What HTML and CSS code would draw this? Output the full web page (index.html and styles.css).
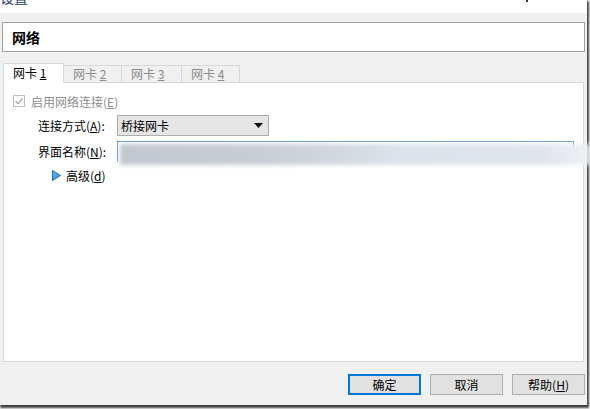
FILE: index.html
```html
<!DOCTYPE html>
<html lang="zh">

<head>
    <meta charset="UTF-8">
    <title>设置 - 网络</title>
    <link rel="stylesheet" href="styles.css">
</head>

<body>
    <div class="window">
        <div class="titlebar">
            <span class="title">设置</span>
            <span class="ctl-min"></span>
            <span class="ctl-close">✕</span>
        </div>

        <div class="content">
            <div class="header">网络</div>

            <div class="tabs">
                <div class="tab active">网卡 <u>1</u></div>
                <div class="tab">网卡 <u>2</u></div>
                <div class="tab wide">网卡 <u>3</u></div>
                <div class="tab">网卡 <u>4</u></div>
            </div>

            <div class="panel">
                <div class="check-row">
                    <svg class="checkbox" width="12" height="12" viewBox="0 0 12 12">
                        <rect x="0.5" y="0.5" width="11" height="11" fill="#fff" stroke="#bcbcbc" />
                        <path d="M2.5 6.2 L5 8.6 L9.6 3.4" fill="none" stroke="#a8a8a8" stroke-width="1.4" />
                    </svg>
                    <span>启用网络连接(<u>E</u>)</span>
                </div>

                <div class="field-row">
                    <span class="field-label">连接方式(<u>A</u>):</span>
                    <div class="combo">
                        <span>桥接网卡</span>
                        <svg width="9" height="5" viewBox="0 0 9 5">
                            <path d="M0 0 H9 L4.5 5 Z" fill="#111" />
                        </svg>
                    </div>
                </div>

                <div class="field-row name-row">
                    <span class="field-label">界面名称(<u>N</u>):</span>
                    <div class="name-input"></div>
                    <!-- blurred-out adapter name -->
                    <div class="name-blur"></div>
                </div>

                <div class="adv-row">
                    <svg width="9" height="11" viewBox="0 0 9 11">
                        <defs>
                            <linearGradient id="tri" x1="0" y1="0" x2="1" y2="1">
                                <stop offset="0" stop-color="#7cc4f4" />
                                <stop offset="1" stop-color="#1a78cc" />
                            </linearGradient>
                        </defs>
                        <path d="M0.5 0.5 L8.5 5.5 L0.5 10.5 Z" fill="url(#tri)" stroke="#1c6fb8" />
                    </svg>
                    <span>高级(<u>d</u>)</span>
                </div>
            </div>

            <div class="buttons">
                <button class="btn default">确定</button>
                <button class="btn">取消</button>
                <button class="btn">帮助(<u>H</u>)</button>
            </div>
        </div>
    </div>
</body>

</html>
```

FILE: styles.css
```css
body {
    margin: 0;
    width: 590px;
    height: 409px;
    overflow: hidden;
    background: #ffffff;
    font-family: "Noto Sans CJK SC", "DejaVu Sans", sans-serif;
    font-size: 12px;
    color: #000;
}

u {
    text-underline-offset: 1px;
}

.window {
    width: 587px;
    height: 405px;
    background: #f0f0f0;
    box-shadow: 1px 2px 2px 1px rgba(0, 0, 0, 0.75);
    display: flex;
    flex-direction: column;
}

.titlebar {
    height: 13px;
    background: #ffffff;
    position: relative;
    overflow: hidden;
}

.title {
    position: absolute;
    left: 0;
    top: -10px;
    font-size: 14px;
    line-height: 14px;
    color: #1b3a6b;
}

.ctl-min {
    position: absolute;
    left: 526px;
    top: 0;
    width: 2px;
    height: 2px;
    background: #333;
}

.ctl-close {
    position: absolute;
    left: 570px;
    top: -9px;
    font-size: 11px;
    line-height: 11px;
    color: #333;
}

.content {
    flex: 1;
    display: flex;
    flex-direction: column;
}

.header {
    margin: 9px 2px 0 2px;
    height: 28px;
    border: 1px solid #a0a0a0;
    background: #ffffff;
    padding-left: 9px;
    font-size: 14px;
    font-weight: bold;
    line-height: 28px;
}

.tabs {
    display: flex;
    align-items: flex-start;
    margin: 11px 0 0 3px;
    height: 19px;
}

.tab {
    box-sizing: border-box;
    width: 59px;
    height: 18px;
    margin-top: 2px;
    margin-left: -1px;
    border: 1px solid #d9d9d9;
    border-bottom: none;
    background: #f0f0f0;
    color: #8a8a8a;
    padding-left: 9px;
    line-height: 16px;
}

.tab.wide {
    width: 61px;
}

.tab.active {
    width: 61px;
    height: 20px;
    margin-top: 0;
    margin-left: 0;
    background: #ffffff;
    color: #000;
    position: relative;
    z-index: 1;
    line-height: 18px;
}

.panel {
    margin: 0 3px;
    height: 278px;
    border: 1px solid #d9d9d9;
    background: #ffffff;
}

.check-row {
    display: flex;
    align-items: center;
    margin: 12px 0 0 9px;
    height: 12px;
    color: #8d8d8d;
}

.checkbox {
    margin-right: 6px;
}

.field-row {
    display: flex;
    align-items: center;
    margin-top: 8px;
    height: 21px;
}

.name-row {
    margin-top: 5px;
    position: relative;
}

.field-label {
    width: 79px;
    margin-left: 34px;
}

.combo {
    box-sizing: border-box;
    width: 152px;
    height: 21px;
    border: 1px solid #adadad;
    background: #e5e5e5;
    display: flex;
    align-items: center;
    justify-content: space-between;
    padding: 0 5px 0 3px;
}

.name-input {
    box-sizing: border-box;
    width: 457px;
    height: 21px;
    border: 1px solid #6a9ccc;
    border-bottom-color: #ffffff;
    background: #ffffff;
}

.name-blur {
    position: absolute;
    left: 116px;
    top: 3px;
    width: 470px;
    height: 21px;
    background: linear-gradient(90deg, #c3c8d0 0%, #c9ced5 30%, #d2d7de 45%, #dde3ea 60%, #e0e5ec 90%, #eef1f4 100%);
    filter: blur(2px);
}

.adv-row {
    display: flex;
    align-items: center;
    margin: 6px 0 0 48px;
    height: 14px;
}

.adv-row svg {
    margin-right: 5px;
}

.buttons {
    display: flex;
    justify-content: flex-end;
    gap: 9px;
    margin: 12px 2px 0 0;
}

.btn {
    box-sizing: border-box;
    width: 73px;
    height: 21px;
    border: 1px solid #adadad;
    background: #e1e1e1;
    font-family: inherit;
    font-size: 12px;
    padding: 0;
    color: #000;
}

.btn.default {
    border: 2px solid #0078d7;
}
```
